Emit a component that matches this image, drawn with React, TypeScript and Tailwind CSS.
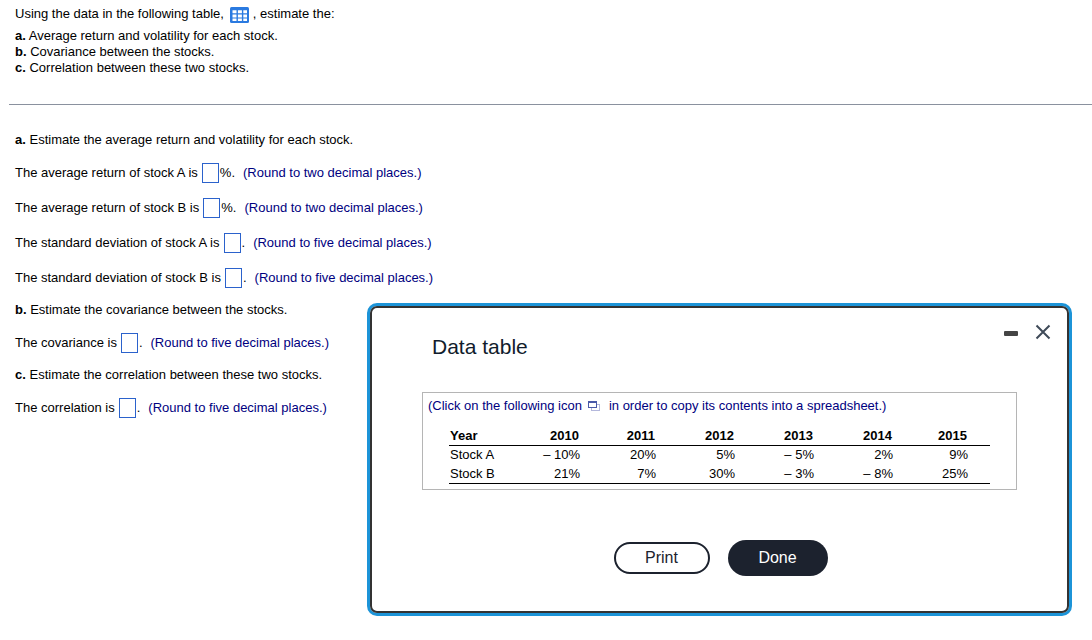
import { useState } from 'react';

const years = [
  { year: '2010', a: '– 10%', b: '21%', width: 'w-[78px]' },
  { year: '2011', a: '20%', b: '7%', width: 'w-[76px]' },
  { year: '2012', a: '5%', b: '30%', width: 'w-[79px]' },
  { year: '2013', a: '– 5%', b: '– 3%', width: 'w-[79px]' },
  { year: '2014', a: '2%', b: '– 8%', width: 'w-[79px]' },
  { year: '2015', a: '9%', b: '25%', width: 'w-[75px]' },
];

interface AnswerRowProps {
  id: string;
  label: string;
  unit?: string;
  hint: string;
}

function AnswerRow({ id, label, unit = '', hint }: AnswerRowProps) {
  const [value, setValue] = useState('');

  return (
    <div className="flex h-[21px] items-center">
      <label htmlFor={id}>{label}</label>
      <input
        id={id}
        type="text"
        value={value}
        onChange={(e) => setValue(e.target.value)}
        className="ml-1 mr-px h-5 w-[17px] border border-[#2b62cc] bg-white text-center outline-none"
      />
      <span>{unit}.</span>
      <span className="ml-2 text-[#000080]">({hint})</span>
    </div>
  );
}

function TableIcon() {
  return (
    <svg width="19" height="16" viewBox="0 0 19 16" className="block" aria-hidden="true">
      <rect width="19" height="16" rx="1.5" fill="#2a7ae0" />
      <g fill="#fff">
        <path d="M2.5 3.3h4v3h-4zM7.9 3.3h4v3h-4zM13.3 3.3h3.7v3h-3.7z" />
        <path d="M2.5 7.4h4v3h-4zM7.9 7.4h4v3h-4zM13.3 7.4h3.7v3h-3.7z" />
        <path d="M2.5 11.5h4v2.6h-4zM7.9 11.5h4v2.6h-4zM13.3 11.5h3.7v2.6h-3.7z" />
      </g>
    </svg>
  );
}

function CopyIcon() {
  return (
    <svg width="12" height="10" viewBox="0 0 12 10" shapeRendering="crispEdges" className="block" aria-hidden="true">
      <path d="M9 3h3v7H3V7h1v2h7V4H9z" fill="#b4b8dc" />
      <path d="M0 0h9v7H0zM1 2v4h7V2z" fillRule="evenodd" fill="#4a5aa8" />
    </svg>
  );
}

function DataTableDialog({ onClose }: { onClose: () => void }) {
  const [minimized, setMinimized] = useState(false);

  return (
    <div
      role="dialog"
      aria-labelledby="dialog-title"
      className="absolute right-[20px] top-[303px] w-[705px] rounded-[10px] border-[3px] border-[#1c94d8]"
    >
      <div className="rounded-[7px] border-2 border-[#333] bg-white px-[50px] pb-[35px]">
        <div className="flex items-start justify-between">
          <h2 id="dialog-title" className="ml-[10px] mt-[25px] text-[21px] leading-[28px] text-[#111c2c]">
            Data table
          </h2>
          <div className="-mr-[35px] mt-[15px] flex items-center gap-3">
            <button type="button" aria-label="Minimize" onClick={() => setMinimized(!minimized)} className="p-1 pt-[7px]">
              <span className="block h-[5px] w-[14px] rounded-[1px] bg-[#444]" />
            </button>
            <button type="button" aria-label="Close" onClick={onClose}>
              <svg width="18" height="18" viewBox="0 0 18 18" stroke="#3f4a58" strokeWidth="2" className="block">
                <path d="M2.5 2.5l13 13M15.5 2.5l-13 13" />
              </svg>
            </button>
          </div>
        </div>

        {!minimized && (
          <>
            <div className="mt-[31px] border border-[#b5b5b5] pb-[5px] pl-[5px]">
              <p className="mt-[5px] flex h-4 items-center text-[#000080]">
                (Click on the following icon
                <button type="button" aria-label="Copy table" className="ml-[6px] mr-[9px]">
                  <CopyIcon />
                </button>
                in order to copy its contents into a spreadsheet.)
              </p>
              <table className="ml-[21px] mt-3 w-[541px] table-fixed border-collapse border-b border-black text-right leading-[18px]">
                <thead>
                  <tr className="h-[19px] border-b border-black">
                    <th scope="col" className="pl-px pt-px text-left">Year</th>
                    {years.map((y) => (
                      <th key={y.year} scope="col" className={`${y.width} pr-[23px] pt-px`}>
                        {y.year}
                      </th>
                    ))}
                  </tr>
                </thead>
                <tbody>
                  <tr className="h-[19px]">
                    <th scope="row" className="pl-px text-left font-normal">Stock A</th>
                    {years.map((y) => (
                      <td key={y.year} className="pr-[22px]">{y.a}</td>
                    ))}
                  </tr>
                  <tr className="h-[19px] leading-4">
                    <th scope="row" className="pl-px pt-px text-left font-normal">Stock B</th>
                    {years.map((y) => (
                      <td key={y.year} className="pr-[22px] pt-px">{y.b}</td>
                    ))}
                  </tr>
                </tbody>
              </table>
            </div>

            <div className="mt-[50px] flex items-center justify-center gap-[18px] pl-[2px] text-[16px]">
              <button
                type="button"
                onClick={() => window.print()}
                className="h-8 w-24 rounded-full border-2 border-[#1c222e] text-[#1c222e]"
              >
                Print
              </button>
              <button type="button" onClick={onClose} className="h-9 w-[100px] rounded-full bg-[#1c222e] text-white">
                Done
              </button>
            </div>
          </>
        )}
      </div>
    </div>
  );
}

export default function App() {
  const [open, setOpen] = useState(true);

  return (
    <main className="relative min-h-screen bg-white font-['Liberation_Sans',Arial,sans-serif] text-[13px] leading-4 text-black">
      <section className="pl-[15px] pt-[5px]">
        <div className="flex h-[18px] items-center">
          <span>Using the data in the following table,</span>
          <button type="button" aria-label="Open data table" onClick={() => setOpen(true)} className="ml-[6px] mr-1 mt-px">
            <TableIcon />
          </button>
          <span>, estimate the:</span>
        </div>
        <div className="mt-[5px]">
          <p><b>a.</b> Average return and volatility for each stock.</p>
          <p><b>b.</b> Covariance between the stocks.</p>
          <p><b>c.</b> Correlation between these two stocks.</p>
        </div>
      </section>

      <hr className="ml-[9px] mt-7 border-[#8a919e]" />

      <section className="flex flex-col gap-[14px] pl-[15px] pt-[27px]">
        <p><b>a.</b> Estimate the average return and volatility for each stock.</p>
        <AnswerRow id="avg-a" label="The average return of stock A is" unit="%" hint="Round to two decimal places." />
        <AnswerRow id="avg-b" label="The average return of stock B is" unit="%" hint="Round to two decimal places." />
        <AnswerRow id="sd-a" label="The standard deviation of stock A is" hint="Round to five decimal places." />
        <AnswerRow id="sd-b" label="The standard deviation of stock B is" hint="Round to five decimal places." />
        <p><b>b.</b> Estimate the covariance between the stocks.</p>
        <AnswerRow id="cov" label="The covariance is" hint="Round to five decimal places." />
        <p><b>c.</b> Estimate the correlation between these two stocks.</p>
        <AnswerRow id="corr" label="The correlation is" hint="Round to five decimal places." />
      </section>

      {open && <DataTableDialog onClose={() => setOpen(false)} />}
    </main>
  );
}
